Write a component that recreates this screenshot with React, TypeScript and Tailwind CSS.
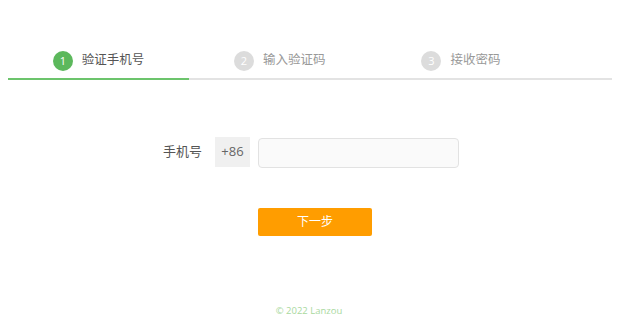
import React from "react";

const font = { fontFamily: '"Open Sans", "Noto Sans CJK SC", sans-serif' };

function Step({ n, label, active }: { n: number; label: string; active?: boolean }) {
  return (
    <div
      className={`w-[30%] h-[37px] mb-[-2px] flex items-center justify-center gap-[9px] border-b-2 ${
        active ? "border-[#6cc46c]" : "border-transparent"
      }`}
    >
      <span
        className={`w-[20px] h-[20px] rounded-full flex items-center justify-center text-[11px] text-white leading-none ${
          active ? "bg-[#5cb85c]" : "bg-[#dcdcdc]"
        }`}
      >
        {n}
      </span>
      <span className={`text-[12.5px] ${active ? "text-[#555]" : "text-[#999]"}`}>{label}</span>
    </div>
  );
}

export default function App() {
  return (
    <div className="w-[618px] h-[328px] bg-white flex flex-col" style={font}>
      <div className="pt-[43px] ml-2 w-[604px] flex border-b-2 border-[#e3e3e3]">
        <Step n={1} label="验证手机号" active />
        <Step n={2} label="输入验证码" />
        <Step n={3} label="接收密码" />
      </div>

      <div className="mx-auto w-[300px] pl-[4px] mt-[56px] flex flex-col">
        <div className="flex items-center">
          <span className="w-[39px] text-[13px] text-[#555] whitespace-nowrap">手机号</span>
          <span className="ml-[13px] w-[35px] h-[30px] bg-[#f0f0f0] flex items-center justify-center text-[13px] text-[#666]">
            +86
          </span>
          <input className="ml-[8px] mt-[2px] w-[201px] h-[30px] rounded-[4px] border border-[#e2e2e2] bg-[#fafafa] outline-none" />
        </div>
        <div className="pl-[95px] mt-[40px]">
          <button className="w-[114px] h-[28px] rounded-[2px] bg-[#ff9d00] text-white text-[12px] flex items-center justify-center">
            下一步
          </button>
        </div>
      </div>

      <div className="mt-[68px] text-center text-[9.5px] text-[#a9d9a0]">© 2022 Lanzou</div>
    </div>
  );
}
